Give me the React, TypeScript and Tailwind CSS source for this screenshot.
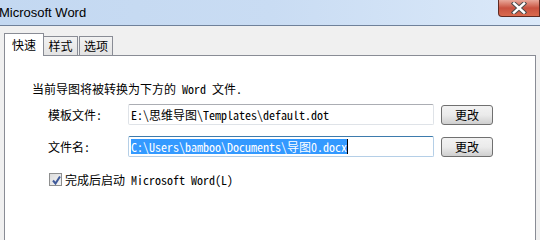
const mono = "font-['Noto_Sans_Mono_CJK_SC','Liberation_Mono','Noto_Sans_CJK_SC',monospace]";
const sans = "font-['Noto_Sans_CJK_SC','Noto_Sans',sans-serif]";

function CloseButton() {
  return (
    <div className="w-[42px] h-[17px] rounded-bl-[4px] border border-t-0 border-[#5e2a22] bg-gradient-to-b from-[#e8a89a] via-[#c8513f] to-[#d96a4e] flex items-center justify-center">
      <svg width="16" height="12" viewBox="0 0 16 12">
        <path d="M3 1.5 L13 10.5 M13 1.5 L3 10.5" stroke="#4b4b4b" strokeWidth="4.4" strokeLinecap="square" />
        <path d="M3 1.5 L13 10.5 M13 1.5 L3 10.5" stroke="#ffffff" strokeWidth="2.4" strokeLinecap="square" />
      </svg>
    </div>
  );
}

function Button() {
  return (
    <div className={`w-[52px] h-[20px] rounded-[3px] border border-[#707070] bg-gradient-to-b from-[#f2f2f2] via-[#ebebeb] to-[#cfcfcf] flex items-center justify-center text-[12px] text-black ${sans}`}>
      更改
    </div>
  );
}

function CheckBox() {
  return (
    <div className="w-[13px] h-[13px] border border-[#8e8f8f] bg-gradient-to-br from-[#dcdcdc] to-[#f5f5f5] p-px">
      <svg width="11" height="11" viewBox="0 0 11 11">
        <path d="M2 5.5 L4.5 8.5 L9 1.5" fill="none" stroke="#3f5a9a" strokeWidth="2" />
      </svg>
    </div>
  );
}

export default function App() {
  return (
    <div className="w-[540px] h-[240px] bg-[#f0f0f0] overflow-hidden flex flex-col">
      <div className="h-[26px] border-b border-[#6f819a] bg-gradient-to-r from-[#c3d8f1] via-[#c9dcf3] to-[#dbe9f9] flex justify-between items-start">
        <div className="h-[25px] flex items-center text-[13px] text-black font-['Liberation_Sans',sans-serif] -ml-px">
          Microsoft Word
        </div>
        <CloseButton />
      </div>

      <div className={`flex items-end pl-[4px] pt-[7px] text-[12px] text-black ${sans}`}>
        <div className="relative z-10 -mb-px w-[40px] h-[23px] bg-white border border-b-0 border-[#898c95] flex items-center justify-center pb-[1px]">
          快速
        </div>
        <div className="w-[34px] h-[19px] bg-gradient-to-b from-[#f2f2f2] to-[#e3e3e3] border border-b-0 border-l-0 border-[#898c95] flex items-center justify-center">
          样式
        </div>
        <div className="w-[34px] h-[19px] ml-px bg-gradient-to-b from-[#f2f2f2] to-[#e3e3e3] border border-b-0 border-[#898c95] flex items-center justify-center">
          选项
        </div>
      </div>

      <div className={`flex-1 mx-[4px] bg-white border border-b-0 border-[#898c95] pl-[27px] pt-[25px] text-[12px] text-black ${mono}`}>
        <div className="leading-[16px]">当前导图将被转换为下方的 Word 文件.</div>

        <div className="mt-[7px] flex items-center h-[21px] pl-[16px]">
          <div className="w-[80px]">模板文件:</div>
          <div className="w-[306px] h-[21px] rounded-[2px] border border-[#dfe3e8] border-t-[#abadb3] flex items-center pl-[2px]">
            E:\思维导图\Templates\default.dot
          </div>
          <div className="ml-[7px]">
            <Button />
          </div>
        </div>

        <div className="mt-[11px] flex items-center h-[21px] pl-[16px]">
          <div className="w-[80px]">文件名:</div>
          <div className="w-[306px] h-[21px] rounded-[2px] border border-[#b5cfe7] border-t-[#3d7bad] flex items-center pl-[2px]">
            <span className="bg-[#3399ff] text-white leading-[15px]">C:\Users\bamboo\Documents\导图0.docx</span>
            <span className="w-px h-[15px] bg-black" />
          </div>
          <div className="ml-[7px]">
            <Button />
          </div>
        </div>

        <div className="mt-[15px] flex items-center h-[15px] pl-[17px] gap-[3px]">
          <CheckBox />
          <span>完成后启动 Microsoft Word(L)</span>
        </div>
      </div>
    </div>
  );
}
